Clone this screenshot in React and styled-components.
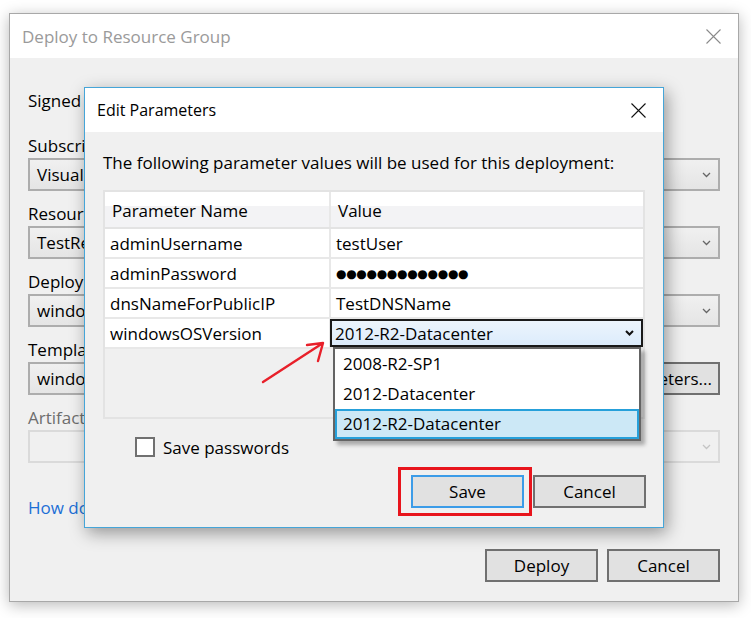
import React from "react";
import styled, { createGlobalStyle } from "styled-components";

const Global = createGlobalStyle`
  html, body { margin: 0; padding: 0; background: #ffffff; }
  body { font-family: "Open Sans", "Noto Sans", sans-serif; font-size: 17px; color: #000; }
  * { box-sizing: border-box; }
`;

const Page = styled.div`
  position: relative;
  width: 751px;
  height: 618px;
  overflow: hidden;
  padding: 13px 0 0 9px;
`;

const Window = styled.div`
  width: 730px;
  height: 589px;
  border: 1px solid #a8a8a8;
  background: #f0f0f0;
  box-shadow: 0 3px 14px rgba(0, 0, 0, 0.28);
  display: flex;
  flex-direction: column;
`;

const TitleBar = styled.div`
  height: 44px;
  flex: none;
  background: #ffffff;
  display: flex;
  align-items: center;
  justify-content: space-between;
  padding: 0 17px 0 12px;
  color: ${(p) => p.$color};
  font-size: ${(p) => p.$size}px;
`;

const CloseIcon = ({ color }) => (
  <svg width="15" height="15" viewBox="0 0 15 15">
    <path d="M0.5 0.5 L14.5 14.5 M14.5 0.5 L0.5 14.5" stroke={color} strokeWidth="1.1" fill="none" />
  </svg>
);

const Chevron = ({ color, bold }) => (
  <svg width="9" height="6" viewBox="0 0 9 6">
    <path d="M1 1 L4.5 4.5 L8 1" stroke={color} strokeWidth={bold ? 2 : 1.3} fill="none" />
  </svg>
);

const WindowBody = styled.div`
  flex: 1;
  display: flex;
  flex-direction: column;
  padding: 32px 18px 19px 18px;
`;

const Label = styled.div`
  height: 22px;
  line-height: 22px;
  white-space: nowrap;
  color: ${(p) => (p.$disabled ? "#6d6d6d" : "#000")};
  margin-top: ${(p) => p.$mt || 0}px;
`;

const FieldRow = styled.div`
  display: flex;
  gap: 7px;
  margin-top: 1px;
`;

const Combo = styled.div`
  flex: 1;
  height: 33px;
  border: 2px solid ${(p) => (p.$disabled ? "#dadada" : "#adadad")};
  background: ${(p) => (p.$disabled ? "#f0f0f0" : "linear-gradient(#f0f0f0, #e5e5e5)")};
  display: flex;
  align-items: center;
  justify-content: space-between;
  padding: 0 7px 0 7px;
  white-space: nowrap;
  overflow: hidden;
`;

const Button = styled.div`
  position: relative;
  height: 33px;
  min-width: 113px;
  padding: 0 6px;
  border: 2px solid ${(p) => (p.$default ? "#3c9ce8" : "#707070")};
  background: #e1e1e1;
  display: flex;
  align-items: center;
  justify-content: center;
  white-space: nowrap;
`;

const HighlightButton = styled(Button)`
  &::after {
    content: "";
    position: absolute;
    top: -10px;
    bottom: -10px;
    left: -15px;
    right: -10px;
    border: 3px solid #e8141c;
  }
`;

const Link = styled.div`
  margin-top: 34px;
  height: 22px;
  line-height: 22px;
  color: #1c6fd6;
  white-space: nowrap;
`;

const Footer = styled.div`
  margin-top: auto;
  display: flex;
  justify-content: flex-end;
  gap: 9px;
`;

const Dialog = styled.div`
  position: absolute;
  left: 84px;
  top: 87px;
  width: 580px;
  border: 1px solid #45a5d8;
  background: #f0f0f0;
  box-shadow: 3px 5px 16px rgba(0, 0, 0, 0.38);
  display: flex;
  flex-direction: column;
`;

const DialogBody = styled.div`
  display: flex;
  flex-direction: column;
  padding: 20px 18px 19px 18px;
`;

const Intro = styled.div`
  height: 22px;
  line-height: 22px;
  white-space: nowrap;
`;

const Grid = styled.div`
  margin-top: 16px;
  height: 229px;
  border: 2px solid #e3e3e3;
  background: #f0f0f0;
  display: flex;
  flex-direction: column;
`;

const GridRow = styled.div`
  display: flex;
  height: ${(p) => (p.$header ? 37 : 30)}px;
  border-bottom: 2px solid ${(p) => (p.$header ? "#e3e3e3" : "#e8e8e8")};
  background: ${(p) =>
    p.$header ? "linear-gradient(#ffffff 0, #ffffff 40%, #f3f3f5 40%, #f3f3f5 100%)" : "#ffffff"};
`;

const Cell = styled.div`
  position: relative;
  display: flex;
  align-items: center;
  white-space: nowrap;
  padding-top: 1px;
  padding-left: ${(p) => (p.$header ? 7 : 5)}px;
  ${(p) => (p.$first ? "width: 226px; border-right: 2px solid #e8e8e8;" : "flex: 1;")}
`;

const EditCombo = styled.div`
  flex: 1;
  align-self: stretch;
  margin: -1px 0 0 -6px;
  border: 2px solid #1a1a1a;
  background: linear-gradient(#ecf4fc, #dcecfc);
  display: flex;
  align-items: center;
  justify-content: space-between;
  padding: 0 7px 0 3px;
`;

const Popup = styled.div`
  position: absolute;
  top: 28px;
  left: 2px;
  width: 308px;
  border: 2px solid #646464;
  background: #ffffff;
  box-shadow: 4px 4px 4px rgba(0, 0, 0, 0.3);
  z-index: 2;
`;

const PopupItem = styled.div`
  height: 30px;
  line-height: ${(p) => (p.$selected ? 26 : 30)}px;
  padding-left: ${(p) => (p.$selected ? 6 : 8)}px;
  border: ${(p) => (p.$selected ? "2px solid #26a0da" : "none")};
  background: ${(p) => (p.$selected ? "#cce8f6" : "#ffffff")};
`;

const Dots = styled.span`
  font-family: "DejaVu Sans", sans-serif;
  font-size: 12px;
  letter-spacing: -0.3px;
`;

const CheckRow = styled.div`
  margin-top: 18px;
  margin-left: 32px;
  display: flex;
  align-items: center;
  gap: 8px;
  height: 20px;
`;

const CheckBox = styled.div`
  width: 20px;
  height: 20px;
  border: 2px solid #707070;
  background: #ffffff;
`;

const DialogFooter = styled.div`
  margin-top: 18px;
  display: flex;
  justify-content: flex-end;
  gap: 9px;
  margin-right: -1px;
`;

const Annotation = styled.svg`
  position: absolute;
  left: 255px;
  top: 335px;
  overflow: visible;
`;

const params = [
  { name: "adminUsername", value: "testUser" },
  { name: "adminPassword", value: "dots" },
  { name: "dnsNameForPublicIP", value: "TestDNSName" },
];

export default function App() {
  return (
    <>
      <Global />
      <Page>
        <Window>
          <TitleBar $color="#9a9a9a" $size={17}>
            <span>Deploy to Resource Group</span>
            <CloseIcon color="#8a8a8a" />
          </TitleBar>
          <WindowBody>
            <Label>Signed in as: testuser@contoso.com</Label>
            <Label $mt={23}>Subscription:</Label>
            <FieldRow>
              <Combo>
                <span>Visual Studio Enterprise</span>
                <Chevron color="#666" />
              </Combo>
            </FieldRow>
            <Label $mt={12}>Resource group:</Label>
            <FieldRow>
              <Combo>
                <span>TestResourceGroup</span>
                <Chevron color="#666" />
              </Combo>
            </FieldRow>
            <Label $mt={12}>Deployment template:</Label>
            <FieldRow>
              <Combo>
                <span>windowsvirtualmachine.json</span>
                <Chevron color="#666" />
              </Combo>
            </FieldRow>
            <Label $mt={12}>Template parameters file:</Label>
            <FieldRow>
              <Combo>
                <span>windowsvirtualmachine.parameters.json</span>
                <Chevron color="#666" />
              </Combo>
              <Button>Edit Parameters...</Button>
            </FieldRow>
            <Label $mt={12} $disabled>
              Artifact storage account:
            </Label>
            <FieldRow>
              <Combo $disabled>
                <span />
                <Chevron color="#c4c4c4" />
              </Combo>
            </FieldRow>
            <Link>How do I configure deployment settings?</Link>
            <Footer>
              <Button>Deploy</Button>
              <Button>Cancel</Button>
            </Footer>
          </WindowBody>
        </Window>

        <Dialog>
          <TitleBar $color="#000" $size={16}>
            <span>Edit Parameters</span>
            <CloseIcon color="#111" />
          </TitleBar>
          <DialogBody>
            <Intro>The following parameter values will be used for this deployment:</Intro>
            <Grid>
              <GridRow $header>
                <Cell $header $first>Parameter Name</Cell>
                <Cell $header>Value</Cell>
              </GridRow>
              {params.map((p) => (
                <GridRow key={p.name}>
                  <Cell $first>{p.name}</Cell>
                  <Cell>{p.value === "dots" ? <Dots>●●●●●●●●●●●●●</Dots> : p.value}</Cell>
                </GridRow>
              ))}
              <GridRow>
                <Cell $first>windowsOSVersion</Cell>
                <Cell>
                  <EditCombo>
                    <span>2012-R2-Datacenter</span>
                    <Chevron color="#111" bold />
                  </EditCombo>
                  <Popup>
                    <PopupItem>2008-R2-SP1</PopupItem>
                    <PopupItem>2012-Datacenter</PopupItem>
                    <PopupItem $selected>2012-R2-Datacenter</PopupItem>
                  </Popup>
                </Cell>
              </GridRow>
            </Grid>
            <CheckRow>
              <CheckBox />
              <span>Save passwords</span>
            </CheckRow>
            <DialogFooter>
              <HighlightButton $default>Save</HighlightButton>
              <Button>Cancel</Button>
            </DialogFooter>
          </DialogBody>
        </Dialog>

        <Annotation width="80" height="60" viewBox="0 0 80 60">
          <path
            d="M8 47 L68 8 M52 10 L68 8 L63 26"
            stroke="#e8202a"
            strokeWidth="2.4"
            fill="none"
            strokeLinecap="round"
            strokeLinejoin="round"
          />
        </Annotation>
      </Page>
    </>
  );
}
